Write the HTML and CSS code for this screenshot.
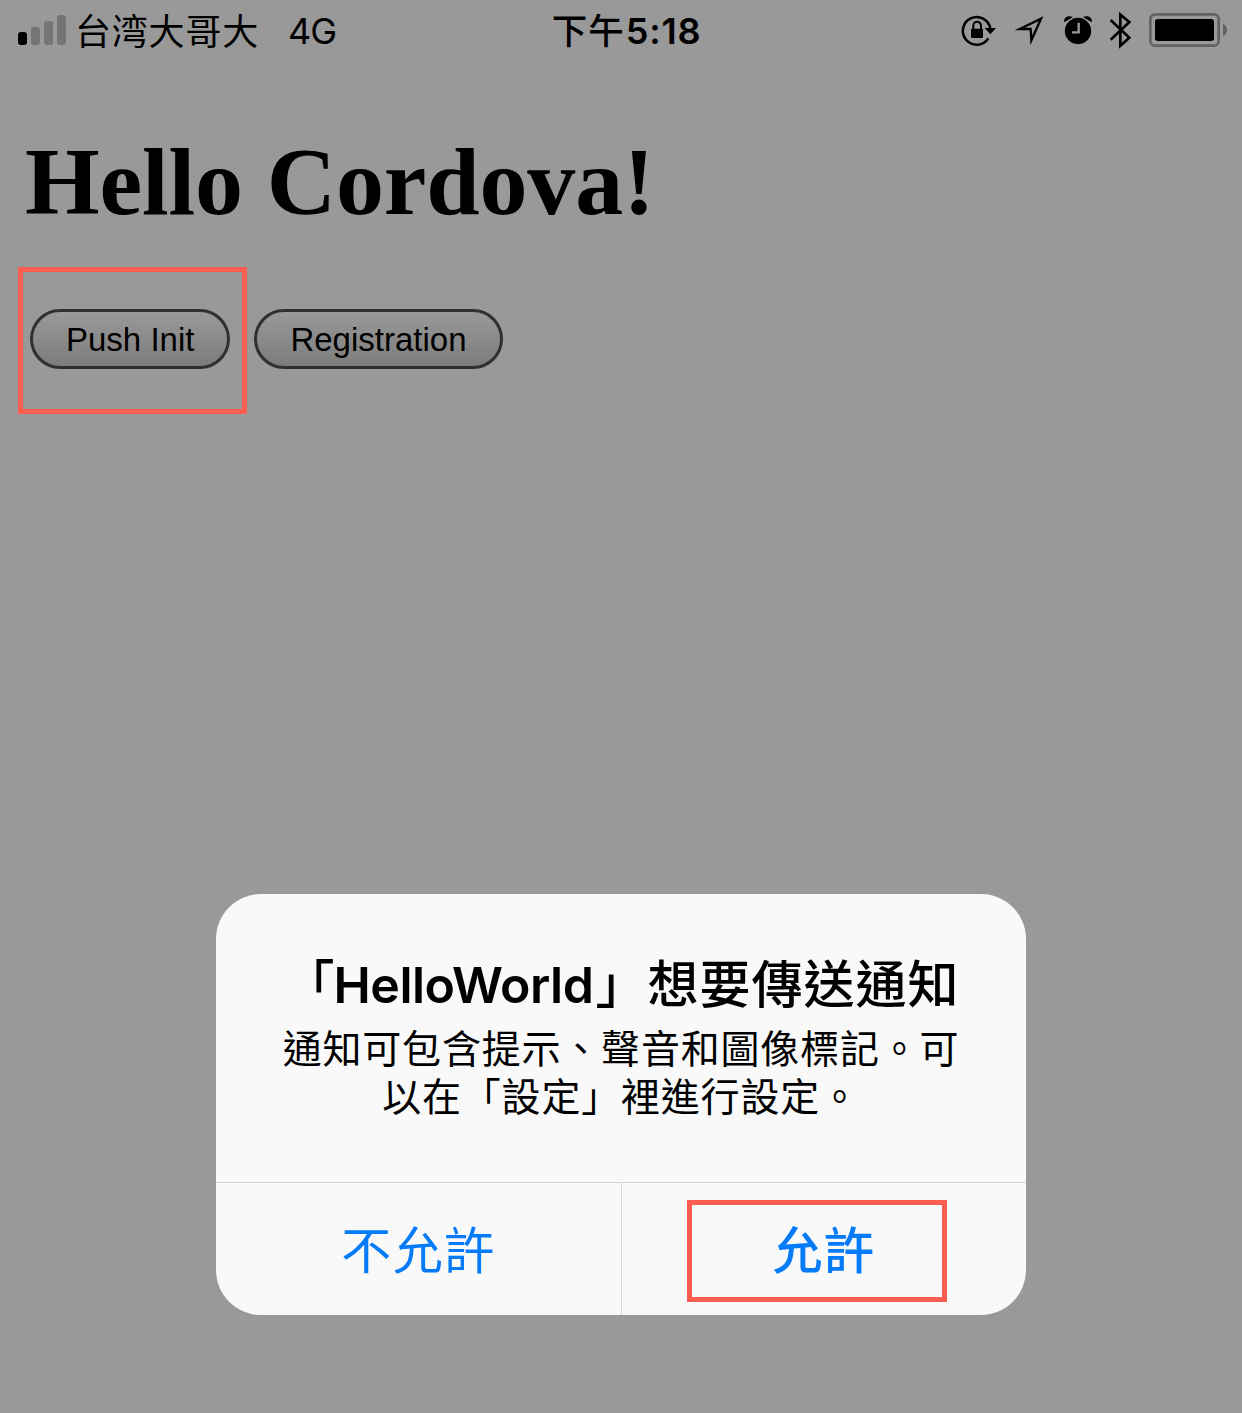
FILE: index.html
```html
<!DOCTYPE html>
<html lang="zh-Hant">
<head>
<meta charset="utf-8">
<title>Hello Cordova!</title>
<link rel="stylesheet" href="styles.css">
</head>
<body>
<div class="screen">
  <header class="status">
    <div class="status-left">
      <svg class="signal" width="48" height="30" viewBox="0 0 48 30">
        <rect x="0" y="17" width="9" height="13" rx="3" fill="#000"/>
        <rect x="13" y="12" width="9" height="18" rx="3" fill="#757575"/>
        <rect x="26" y="6" width="9" height="24" rx="3" fill="#757575"/>
        <rect x="39" y="0" width="9" height="30" rx="3" fill="#757575"/>
      </svg>
      <span class="carrier" lang="zh-Hans">台湾大哥大</span>
      <span class="network">4G</span>
    </div>
    <div class="clock"><span class="period">下午</span><span class="digits">5:18</span></div>
    <div class="status-right">
      <svg class="icon-rotation" width="36" height="36" viewBox="33 36 108 108">
        <path d="M121 86A41.500 41.500 0 1 0 115 115" fill="none" stroke="#000" stroke-width="7.500"/>
        <path d="M104 84H138L121 103Z"/>
        <rect x="63" y="86" width="36" height="28" rx="3"/>
        <path d="M70 90V77A11.500 11.500 0 0 1 93 77V90" fill="none" stroke="#000" stroke-width="6"/>
      </svg>
      <svg class="icon-location" width="32" height="32" viewBox="192 42 96 96">
        <path d="M209 87L273 56L244 121L242 87Z" fill="none" stroke="#000" stroke-width="7" stroke-miterlimit="10"/>
      </svg>
      <svg class="icon-alarm" width="30" height="30" viewBox="339 44 90 90">
        <circle cx="384" cy="92" r="39.500"/>
        <path d="M343 66C339 52 354 43 369 50ZM425 66C429 52 414 43 399 50Z"/>
        <path d="M386 67V96H366" fill="none" stroke="#999" stroke-width="7"/>
      </svg>
      <svg class="icon-bluetooth" width="24" height="38" viewBox="477 34 72 114">
        <path d="M482 61L538 114L511 138V45L538 67L482 120" fill="none" stroke="#000" stroke-width="8"/>
      </svg>
      <svg class="icon-battery" width="78" height="34" viewBox="597 39 234 102">
        <rect x="601" y="43" width="205" height="94" rx="15" fill="none" stroke="#626262" stroke-width="8"/>
        <rect x="615" y="57" width="177" height="66" rx="8"/>
        <path d="M819 72C835 78 835 102 819 108Z" fill="#626262"/>
      </svg>
    </div>
  </header>

  <main class="page">
    <h1 class="heading">Hello Cordova!</h1>
    <div class="actions">
      <button class="pill marked" type="button">Push Init</button>
      <button class="pill" type="button">Registration</button>
    </div>
  </main>

  <section class="alert" role="alertdialog">
    <div class="alert-body">
      <h2 class="alert-title">「<span class="app-name">HelloWorld</span>」想要傳送通知</h2>
      <p class="alert-text">通知可包含提示、聲音和圖像標記。可<br>以在「設定」裡進行設定。</p>
    </div>
    <div class="alert-actions">
      <button class="choice" type="button">不允許</button>
      <button class="choice primary" type="button">允許</button>
    </div>
  </section>
</div>
</body>
</html>
```
FILE: styles.css
```css
* {
  box-sizing: border-box;
}

body {
  margin: 0;
  background: #999;
  color: #000;
}

button {
  margin: 0;
  color: inherit;
}

.screen {
  display: flex;
  flex-direction: column;
  align-items: stretch;
  width: 1242px;
  height: 1413px;
  overflow: hidden;
}

/* Status bar */
.status {
  display: grid;
  grid-template-columns: 1fr auto 1fr;
  height: 60px;
  padding: 0 15px 0 18px;
  font: 400 36px/58px Inter, "Noto Sans CJK TC", sans-serif;
}

.status-left,
.status-right,
.clock {
  display: flex;
  align-items: center;
  white-space: nowrap;
}

.carrier {
  margin-left: 9px;
  padding-bottom: 2px;
  font: 400 36px/58px "Noto Sans CJK SC", sans-serif;
  letter-spacing: 0.8px;
}

.network {
  margin-left: 29px;
  padding-top: 2px;
  letter-spacing: -1px;
}

.clock {
  padding-left: 8px;
}

.period {
  padding-bottom: 2px;
  font: 500 35.5px/58px "Noto Sans CJK TC", sans-serif;
  letter-spacing: 1px;
}

.digits {
  padding: 2px 0 0 1px;
  font-weight: 600;
  letter-spacing: 0.8px;
}

.status-right {
  justify-content: flex-end;
}

.icon-location {
  margin-left: 17px;
}

.icon-alarm {
  margin-left: 17px;
}

.icon-bluetooth {
  margin-left: 16px;
}

.icon-battery {
  margin-left: 16px;
}

/* Page content */
.page {
  height: 834px;
  padding: 67px 24px 0;
}

.heading {
  margin: 0;
  padding-left: 1px;
  font: bold 96px/110px "Liberation Serif", serif;
  letter-spacing: -0.15px;
}

.actions {
  display: flex;
  gap: 24px;
  padding: 72px 0 0 6px;
}

.pill {
  position: relative;
  height: 60px;
  padding: 2px 33px 0;
  border: 3px solid #303030;
  border-radius: 30px;
  background: linear-gradient(#999, #7c7c7c);
  font: 33px/52px "Liberation Sans", sans-serif;
}

.marked::after {
  content: "";
  position: absolute;
  inset: -45px -20px -48px -15px;
  border: 5px solid #fb5d50;
}

/* Permission alert */
.alert {
  display: flex;
  flex-direction: column;
  align-self: center;
  width: 810px;
  height: 421px;
  border-radius: 45px;
  background: #f9f9f9;
  text-align: center;
  white-space: nowrap;
}

.alert-body {
  height: 288px;
  padding-top: 56px;
}

.alert-title {
  margin: 0;
  padding-left: 1px;
  font: 500 51px/62px "Noto Sans CJK TC", sans-serif;
  letter-spacing: 1px;
}

.app-name {
  margin: 0 2px 0 -2px;
  font-family: Inter, sans-serif;
  font-weight: 600;
  font-size: 50px;
  letter-spacing: -0.5px;
}

.alert-text {
  margin: 6px 0 0;
  font: 400 39px/48px "Noto Sans CJK TC", sans-serif;
  letter-spacing: 0.8px;
}

.alert-actions {
  display: grid;
  grid-template-columns: 1fr 1fr;
  height: 133px;
  border-top: 1px solid #d5d5da;
}

.choice {
  position: relative;
  padding: 0 0 4px;
  border: 0;
  background: none;
  color: #067bf8;
  font: 400 50px/128px "Noto Sans CJK TC", sans-serif;
  letter-spacing: 1.5px;
}

.primary {
  border-left: 1px solid #d5d5da;
  font-weight: 500;
}

.primary::after {
  content: "";
  position: absolute;
  inset: 17px 79px 13px 65px;
  border: 5px solid #fb5d50;
}
```
